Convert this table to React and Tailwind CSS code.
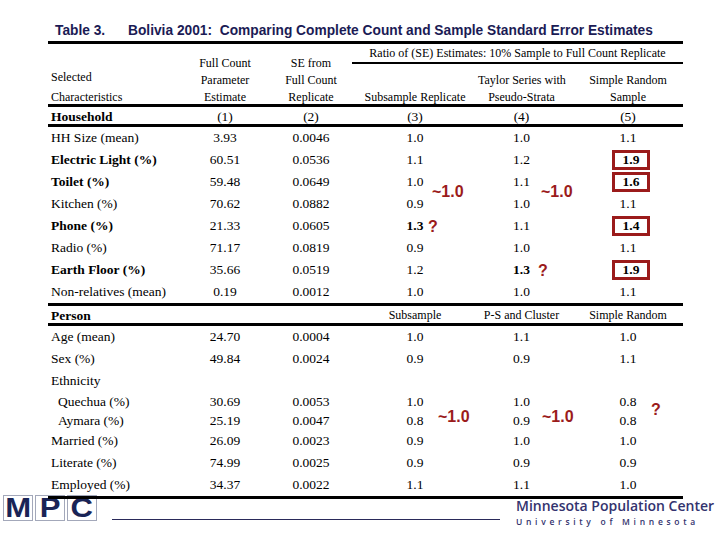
import React from "react";

const serif = { fontFamily: '"Liberation Serif", "Times New Roman", serif' };

const RED = "text-[#9b1b1b]";

function Box({ v }) {
  return (
    <span className="ml-[6px] inline-flex h-[20px] w-[38px] items-center justify-center border-[3px] border-[#9b1b1b] font-bold leading-none">
      {v}
    </span>
  );
}

function Row({ label, bold, indent, vals = [], h = "h-[22px]" }) {
  return (
    <div className={`grid grid-cols-[132px_90px_82px_126px_87px_118px] items-center ${h}`}>
      <div className={`${indent ? "pl-[10px]" : "pl-[3px]"} ${bold ? "font-bold" : ""} whitespace-nowrap`}>{label}</div>
      <div className="text-center">{vals[0]}</div>
      <div className="text-center">{vals[1]}</div>
      <div className="text-center">{vals[2]}</div>
      <div className="text-center">{vals[3]}</div>
      <div className="pl-[8px] text-center">{vals[4]}</div>
    </div>
  );
}

const B = ({ children }) => <span className="font-bold">{children}</span>;

export default function App() {
  const hh = [
    ["HH Size (mean)", false, ["3.93", "0.0046", "1.0", "1.0", "1.1"]],
    ["Electric Light (%)", true, ["60.51", "0.0536", "1.1", "1.2", <Box v="1.9" />]],
    ["Toilet (%)", true, ["59.48", "0.0649", "1.0", "1.1", <Box v="1.6" />]],
    ["Kitchen (%)", false, ["70.62", "0.0882", "0.9", "1.0", "1.1"]],
    ["Phone (%)", true, ["21.33", "0.0605", <B>1.3</B>, "1.1", <Box v="1.4" />]],
    ["Radio (%)", false, ["71.17", "0.0819", "0.9", "1.0", "1.1"]],
    ["Earth Floor (%)", true, ["35.66", "0.0519", "1.2", <B>1.3</B>, <Box v="1.9" />]],
    ["Non-relatives (mean)", false, ["0.19", "0.0012", "1.0", "1.0", "1.1"]],
  ];

  return (
    <div className="relative h-[540px] w-[720px] overflow-hidden bg-white text-black">
      {/* Title */}
      <div
        className="flex h-[41px] items-end pb-[1px] pl-[55px] text-[13.75px] font-bold leading-[18px] text-[#1b1b55]"
        style={{ fontFamily: '"Liberation Sans", Arial, sans-serif' }}
      >
        <span className="w-[73px]">Table 3.</span>
        <span className="whitespace-nowrap">Bolivia 2001:&nbsp; Comparing Complete Count and Sample Standard Error Estimates</span>
      </div>

      {/* Table */}
      <div className="relative z-10 ml-[48px] w-[635px] border-t-[3px] border-black text-[13.5px]" style={serif}>
        {/* Header */}
        <div className="flex h-[60px] text-[12px]">
          <div className="relative top-[3px] flex w-[132px] flex-col justify-end pl-[3px] leading-[20px]">
            <div>Selected</div>
            <div>Characteristics</div>
          </div>
          <div className="relative top-[2px] flex w-[90px] flex-col justify-end text-center leading-[17px]">
            <div>Full Count</div>
            <div>Parameter</div>
            <div>Estimate</div>
          </div>
          <div className="relative top-[2px] flex w-[82px] flex-col justify-end text-center leading-[17px]">
            <div>SE from</div>
            <div>Full Count</div>
            <div>Replicate</div>
          </div>
          <div className="flex w-[331px] flex-col">
            <div className="flex h-[20px] items-center justify-center whitespace-nowrap border-b-2 border-black">
              Ratio of (SE) Estimates: 10% Sample to Full Count Replicate
            </div>
            <div className="relative top-[2px] flex flex-1 items-end whitespace-nowrap leading-[17px]">
              <div className="w-[126px] text-center">Subsample Replicate</div>
              <div className="w-[87px] text-center">
                <div>Taylor Series with</div>
                <div>Pseudo-Strata</div>
              </div>
              <div className="w-[118px] pl-[8px] text-center">
                <div>Simple Random</div>
                <div>Sample</div>
              </div>
            </div>
          </div>
        </div>

        <div className="border-t-[3px] border-black" />
        <Row label="Household" bold h="h-[17px] leading-[17px] pt-[1px]" vals={["(1)", "(2)", "(3)", "(4)", "(5)"]} />
        <div className="border-t-[3px] border-black" />

        {hh.map(([l, b, v]) => (
          <Row key={l} label={l} bold={b} vals={v} />
        ))}

        <div className="border-t-[3px] border-black" />
        <div className="grid h-[17px] grid-cols-[132px_90px_82px_126px_87px_118px] items-center pt-[2px] text-[12px] leading-[15px]">
          <div className="pl-[3px] text-[13.5px] font-bold">Person</div>
          <div />
          <div />
          <div className="text-center">Subsample</div>
          <div className="whitespace-nowrap text-center">P-S and Cluster</div>
          <div className="whitespace-nowrap pl-[8px] text-center">Simple Random</div>
        </div>
        <div className="border-t-[3px] border-black" />

        <Row label="Age (mean)" vals={["24.70", "0.0004", "1.0", "1.1", "1.0"]} />
        <Row label="Sex (%)" vals={["49.84", "0.0024", "0.9", "0.9", "1.1"]} />
        <Row label="Ethnicity" vals={[]} />
        <Row label="Quechua (%)" indent h="h-[19px]" vals={["30.69", "0.0053", "1.0", "1.0", "0.8"]} />
        <Row label="Aymara (%)" indent h="h-[19px]" vals={["25.19", "0.0047", "0.8", "0.9", "0.8"]} />
        <Row label="Married (%)" vals={["26.09", "0.0023", "0.9", "1.0", "1.0"]} />
        <Row label="Literate (%)" vals={["74.99", "0.0025", "0.9", "0.9", "0.9"]} />
        <Row label="Employed (%)" vals={["34.37", "0.0022", "1.1", "1.1", "1.0"]} />
        <div className="border-t-[3px] border-black" />
      </div>

      {/* Annotations */}
      <div
        className={`pointer-events-none absolute inset-0 z-20 text-[16px] font-bold leading-[18px] ${RED}`}
        style={{ fontFamily: '"Liberation Sans", Arial, sans-serif' }}
      >
        <span className="absolute left-[432px] top-[183px]">~1.0</span>
        <span className="absolute left-[541px] top-[183px]">~1.0</span>
        <span className="absolute left-[428px] top-[218px]">?</span>
        <span className="absolute left-[538px] top-[262px]">?</span>
        <span className="absolute left-[438px] top-[408px]">~1.0</span>
        <span className="absolute left-[542px] top-[408px]">~1.0</span>
        <span className="absolute left-[651px] top-[401px]">?</span>
      </div>

      {/* Footer */}
      <div className="relative -mt-[4px] flex items-start pl-[3px]">
        <div className="flex shrink-0 gap-[2px]" style={{ fontFamily: '"Liberation Sans", Arial, sans-serif' }}>
          {["M", "P", "C"].map((c) => (
            <div
              key={c}
              className="flex h-[26px] w-[30px] items-center justify-center border border-[#a3a8ba] bg-white text-[27px] font-bold leading-[24px] text-[#1a2456]"
            >
              <span className="inline-block scale-x-115">{c}</span>
            </div>
          ))}
        </div>
        <div className="ml-[15px] mt-[24px] h-[1px] w-[388px] shrink-0 bg-[#2a2a5a]" />
        <div
          className="ml-[16px] mt-[3px] flex shrink-0 flex-col whitespace-nowrap text-[#33336e]"
          style={{ fontFamily: '"Open Sans", sans-serif' }}
        >
          <div className="text-[14px] font-semibold leading-[16px]">Minnesota Population Center</div>
          <div className="mt-[4px] text-[8.5px] font-semibold leading-[8px] tracking-[3.7px]">University of Minnesota</div>
        </div>
      </div>
    </div>
  );
}
